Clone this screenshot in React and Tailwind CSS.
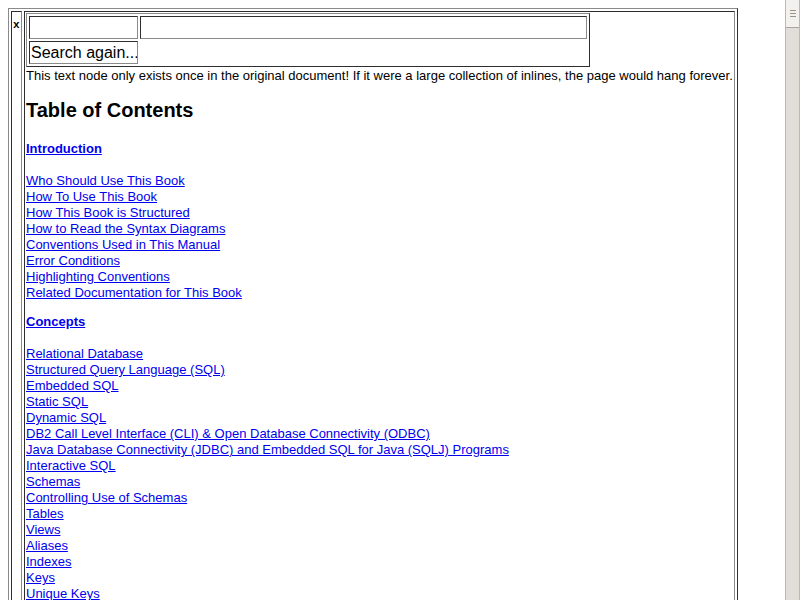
import React from 'react'

const introLinks = [
  'Who Should Use This Book',
  'How To Use This Book',
  'How This Book is Structured',
  'How to Read the Syntax Diagrams',
  'Conventions Used in This Manual',
  'Error Conditions',
  'Highlighting Conventions',
  'Related Documentation for This Book',
]

const conceptLinks = [
  'Relational Database',
  'Structured Query Language (SQL)',
  'Embedded SQL',
  'Static SQL',
  'Dynamic SQL',
  'DB2 Call Level Interface (CLI) & Open Database Connectivity (ODBC)',
  'Java Database Connectivity (JDBC) and Embedded SQL for Java (SQLJ) Programs',
  'Interactive SQL',
  'Schemas',
  'Controlling Use of Schemas',
  'Tables',
  'Views',
  'Aliases',
  'Indexes',
  'Keys',
  'Unique Keys',
  'Primary Keys',
  'Foreign Keys',
]

// table border=1 look: outset for tables, inset for cells
const outset = 'border border-t-[#8a8a8a] border-l-[#8a8a8a] border-b-[#2e2e2e] border-r-[#2e2e2e]'
const inset = 'border border-t-[#2e2e2e] border-l-[#2e2e2e] border-b-[#8a8a8a] border-r-[#8a8a8a]'

function LinkList({ items }) {
  return (
    <div className="flex flex-col items-start">
      {items.map((t) => (
        <a key={t} href="#" className="text-[#0000ee] underline leading-4 whitespace-nowrap">
          {t}
        </a>
      ))}
    </div>
  )
}

export default function App() {
  return (
    <div className="flex h-[600px] overflow-hidden bg-white text-black font-['Liberation_Sans',Arial,sans-serif] text-[13px]">
      <div className="flex-1 overflow-hidden">
        <div className={`mt-[8px] ml-[8px] w-[730px] min-h-[760px] p-[2px] flex gap-[2px] ${outset}`}>
          <div className={`w-[11px] flex-none px-[1px] pt-[7px] ${inset}`}>
            <span className="block font-['Liberation_Mono',monospace] text-[11px] leading-[13px] font-bold">x</span>
          </div>

          <div className={`flex-1 p-[1px] ${inset}`}>
            <div className={`w-[564px] p-[2px] flex flex-col gap-[2px] ${outset}`}>
              <div className="flex gap-[2px]">
                <div className={`w-[109px] h-[23px] ${inset}`}></div>
                <div className={`w-[447px] h-[23px] ${inset}`}></div>
              </div>
              <div className="flex">
                <div className={`w-[109px] h-[23px] flex items-center pl-[1px] overflow-hidden whitespace-nowrap text-[16px] leading-[20px] ${inset}`}>
                  Search again...
                </div>
              </div>
            </div>

            <p className="pt-[1px] leading-4 whitespace-nowrap">
              This text node only exists once in the original document! If it were a large collection of inlines, the page would hang forever.
            </p>

            <h2 className="mt-[14px] text-[20px] leading-[24px] font-bold">Table of Contents</h2>

            <a href="#" className="block mt-[19px] w-fit font-bold text-[#0000ee] underline leading-4">
              Introduction
            </a>
            <div className="mt-[16px]">
              <LinkList items={introLinks} />
            </div>

            <a href="#" className="block mt-[13px] w-fit font-bold text-[#0000ee] underline leading-4">
              Concepts
            </a>
            <div className="mt-[16px]">
              <LinkList items={conceptLinks} />
            </div>
          </div>
        </div>
      </div>

      <div className="w-[15px] flex-none h-full bg-[#e1ded9] border-l border-r border-[#bdb7b0] flex flex-col">
        <div className="h-[28px] bg-[#f3f1ee] border-b border-[#aaa49c] flex flex-col items-center justify-center gap-[2px]">
          <div className="w-[6px] h-px bg-[#9a938b]"></div>
          <div className="w-[6px] h-px bg-[#9a938b]"></div>
          <div className="w-[6px] h-px bg-[#9a938b]"></div>
        </div>
      </div>
    </div>
  )
}
